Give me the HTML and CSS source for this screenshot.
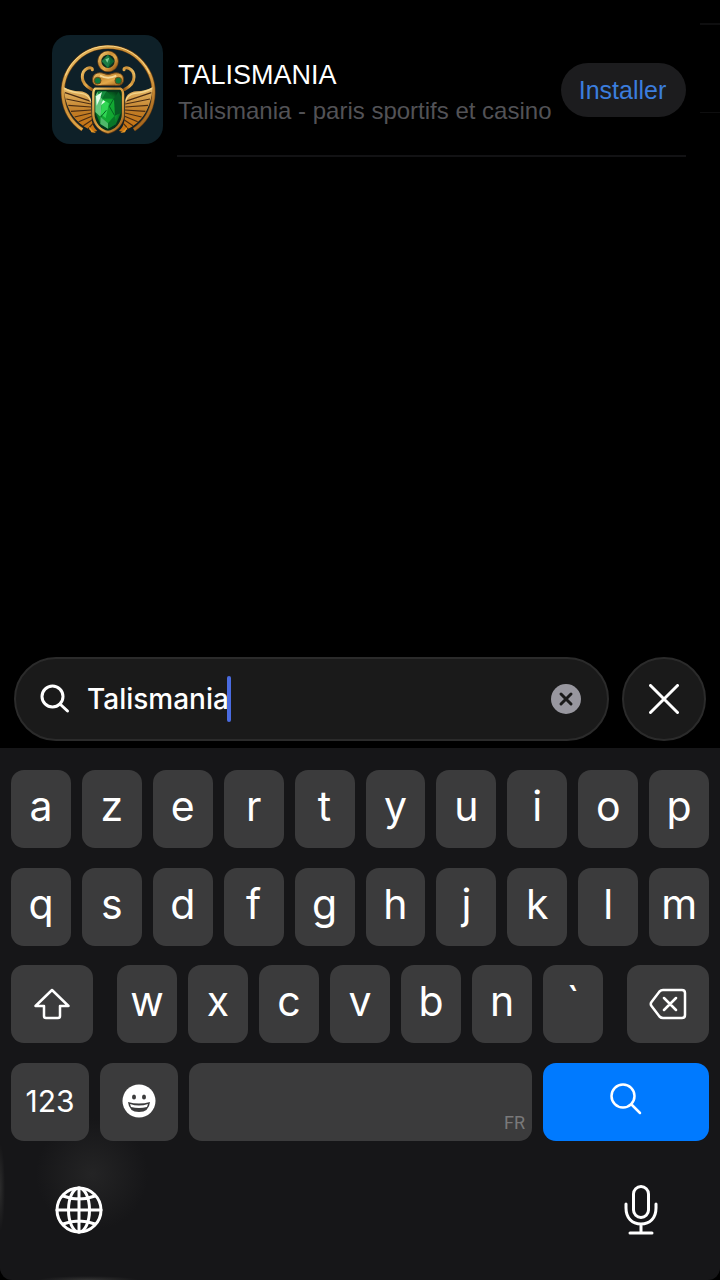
FILE: index.html
```html
<!DOCTYPE html>
<html lang="fr">
<head>
<meta charset="utf-8">
<meta name="viewport" content="width=device-width, initial-scale=1">
<title>Talismania</title>
<link rel="stylesheet" href="styles.css">
</head>
<body>
<main class="results">
  <article class="app">
    <svg class="app-icon" viewBox="0 0 333 327" preserveAspectRatio="none" role="img" aria-label="Talismania">
      <defs>
        <linearGradient id="gold" x1="0" y1="0" x2="1" y2="1">
          <stop offset="0" stop-color="#f5cf74"/><stop offset=".35" stop-color="#c98d35"/>
          <stop offset=".6" stop-color="#e3a94a"/><stop offset="1" stop-color="#94530f"/>
        </linearGradient>
        <linearGradient id="wing" x1="0" y1="0" x2="0" y2="1">
          <stop offset="0" stop-color="#e6bc6c"/><stop offset=".55" stop-color="#c07c26"/><stop offset="1" stop-color="#c9720e"/>
        </linearGradient>
        <radialGradient id="gem" cx=".5" cy=".55" r=".6">
          <stop offset="0" stop-color="#1fc440"/><stop offset=".6" stop-color="#0b8a2a"/><stop offset="1" stop-color="#04431a"/>
        </radialGradient>
        <g id="half">
          <path d="M35 156 C48 164 64 168 84 169 C104 171 114 180 117 194 L119 250 C120 268 126 279 136 288 L126 290 C108 283 86 270 70 252 C48 228 37 190 35 156Z" fill="url(#wing)"/>
          <path d="M117 199 L39 173 M117 207 L43 192 M117 216 L49 211 M118 225 L57 229 M118 234 L68 246 M119 244 L80 260 M121 254 L94 272 M125 263 L108 282" stroke="#4a2c12" stroke-width="3.5" fill="none"/>
          <path d="M37 160 C54 171 70 173 88 175 C105 177 113 186 116 200" stroke="#f4d68c" stroke-width="4" fill="none"/>
          <path d="M121 104 C121 92 91 99 91 126 C91 143 100 153 119 163" stroke="url(#gold)" stroke-width="9" fill="none" stroke-linecap="round"/>
          <path d="M108 272 L120 285 L132 294 L118 292Z" fill="#e89825"/>
        </g>
      </defs>
      <rect width="333" height="327" fill="#0e2028"/>
      <path d="M91 284 A136 136 0 1 1 246 284" fill="none" stroke="#6a4116" stroke-width="12"/>
      <path d="M91 284 A136 136 0 1 1 246 284" fill="none" stroke="url(#gold)" stroke-width="8"/>
      <path d="M40 122 A136 136 0 0 1 293 116" fill="none" stroke="#f8d98c" stroke-width="3"/>
      <use href="#half"/>
      <use href="#half" transform="translate(337 0) scale(-1 1)"/>
      <circle cx="168" cy="79" r="25" fill="none" stroke="#6a4116" stroke-width="14"/>
      <circle cx="168" cy="79" r="25" fill="#102c20" stroke="url(#gold)" stroke-width="10"/>
      <path d="M168 59 L187 79 L168 99 L149 79Z" fill="#0b6330"/>
      <path d="M168 59 L175 79 L168 99 L149 79Z" fill="#1d7d45"/>
      <path d="M160 73 L172 68 L166 83Z" fill="#7ccf96"/>
      <path d="M122 139 C119 116 139 109 157 116 Q168 121 179 116 C198 109 218 116 214 139 C211 151 199 153 187 151 L150 151 C136 153 124 151 122 139Z" fill="url(#gold)" stroke="#6b4117" stroke-width="3"/>
      <path d="M144 122 Q168 134 193 122" fill="none" stroke="#f6d896" stroke-width="6"/>
      <circle cx="137" cy="137" r="10" fill="#107a3c" stroke="#6f4a16" stroke-width="3"/>
      <circle cx="199" cy="137" r="10" fill="#107a3c" stroke="#6f4a16" stroke-width="3"/>
      <path d="M127 160 H207 Q217 163 217 177 V240 C216 270 192 294 168 297 C145 294 121 270 120 240 V177 Q120 163 127 160Z" fill="#573616"/>
      <path d="M130 161 H205 Q213 164 213 178 V239 C212 266 191 287 168 291 C146 287 125 266 124 239 V178 Q124 164 130 161Z" fill="#06331b" stroke="url(#gold)" stroke-width="7"/>
      <path d="M136 170 H200 L207 185 V233 L192 267 L168 281 L145 267 L130 233 V185Z" fill="url(#gem)"/>
      <path d="M136 170 L151 193 L146 246 L130 231 V184Z" fill="#62c77c"/>
      <path d="M151 193 L164 169 H136Z" fill="#168d3e"/>
      <path d="M164 169 L186 190 H151Z" fill="#087028"/>
      <path d="M186 190 L200 170 L207 185 V233 L188 242Z" fill="#075b24"/>
      <path d="M151 193 H186 L188 242 L168 265 L146 246Z" fill="#12a832"/>
      <path d="M151 193 L171 205 L161 249 L146 238Z" fill="#31d654"/>
      <path d="M146 246 L168 265 L168 281 L145 267Z" fill="#4fb96b"/>
      <path d="M168 265 L188 242 L192 267 L168 281Z" fill="#087628"/>
      <path d="M132 184 L150 171 L144 191 L134 212Z M147 210 L153 195 L160 200Z" fill="#e3ffe9"/>
      <path d="M186 190 L172 214 L188 242 M146 246 L163 226" stroke="#056322" stroke-width="3" fill="none"/>
    </svg>
    <div class="app-row">
      <div class="app-text">
        <h1 class="app-name">TALISMANIA</h1>
        <p class="app-sub">Talismania - paris sportifs et casino</p>
      </div>
      <button class="install" type="button">Installer</button>
    </div>
  </article>
  <div class="next-peek"></div>
</main>

<form class="search">
  <label class="field">
    <svg class="field-icon" viewBox="0 0 30 30" aria-hidden="true"><circle cx="12.500" cy="12.500" r="10.500" /><path d="M20.500 20.500 L27.500 27"/></svg>
    <input class="field-input" type="text" value="Talismania" aria-label="Rechercher">
    <span class="caret"></span>
    <button class="clear" type="button" aria-label="Effacer"><svg viewBox="0 0 30 30"><path d="M10 10 L20 20 M20 10 L10 20"/></svg></button>
  </label>
  <button class="close" type="button" aria-label="Fermer"><svg viewBox="0 0 30 30"><path d="M1.500 1.500 L28.500 28.500 M28.500 1.500 L1.500 28.500"/></svg></button>
</form>

<section class="keyboard" aria-label="Clavier">
  <div class="rows">
    <div class="row">
      <button class="key">a</button><button class="key">z</button><button class="key">e</button><button class="key">r</button><button class="key">t</button><button class="key">y</button><button class="key">u</button><button class="key">i</button><button class="key">o</button><button class="key">p</button>
    </div>
    <div class="row">
      <button class="key">q</button><button class="key">s</button><button class="key">d</button><button class="key">f</button><button class="key">g</button><button class="key">h</button><button class="key">j</button><button class="key">k</button><button class="key">l</button><button class="key">m</button>
    </div>
    <div class="row row-wide">
      <button class="key key-side" aria-label="Majuscule"><svg class="shift" viewBox="0 0 36 32"><path d="M18 2 L34.500 18 H26 V28 Q26 30 24 30 H12 Q10 30 10 28 V18 H1.500Z"/></svg></button>
      <div class="row letters">
        <button class="key">w</button><button class="key">x</button><button class="key">c</button><button class="key">v</button><button class="key">b</button><button class="key">n</button><button class="key">`</button>
      </div>
      <button class="key key-side" aria-label="Supprimer"><svg class="back" viewBox="0 0 38 32"><path d="M14 2 H33 Q36 2 36 5 V27 Q36 30 33 30 H14 Q12 30 10.500 28.500 L2.500 18 Q1 16 2.500 14 L10.500 3.500 Q12 2 14 2Z M15 10 L27 22 M27 10 L15 22"/></svg></button>
    </div>
    <div class="row">
      <button class="key key-num">123</button>
      <button class="key key-emoji" aria-label="Emoji"><svg class="smile" viewBox="0 0 34 34"><circle cx="17" cy="17" r="16.500" fill="#fff"/><ellipse cx="12" cy="13" rx="2" ry="2.500" fill="#3b3b3c"/><ellipse cx="22" cy="13" rx="2" ry="2.500" fill="#3b3b3c"/><path d="M6 18 Q17 21 28 18 Q27 28 17 28 Q7 28 6 18Z" fill="#3b3b3c"/><path d="M8 20 Q17 23 26 20 L25 23 Q17 25 9 23Z" fill="#fff"/></svg></button>
      <button class="key key-space" aria-label="Espace"><span class="lang">FR</span></button>
      <button class="key key-go" aria-label="Rechercher"><svg class="go" viewBox="0 0 32 32"><circle cx="13" cy="13" r="11.500"/><path d="M21.500 21.500 L30 30"/></svg></button>
    </div>
  </div>
  <div class="tools">
    <button class="tool" aria-label="Langue"><svg class="globe" viewBox="0 0 48 48"><circle cx="24" cy="24" r="22"/><ellipse cx="24" cy="24" rx="10.500" ry="22"/><path d="M24 2 V46 M2 24 H46 M8 10 Q24 16 40 10 M8 38 Q24 32 40 38"/></svg></button>
    <button class="tool" aria-label="Dictée"><svg class="mic" viewBox="0 0 34 50"><rect x="9.500" y="1.500" width="15" height="31" rx="7.500"/><path d="M2 19 V23 C2 33 8 39 17 39 C26 39 32 33 32 23 V19 M17 39 V48 M6 48 H28"/></svg></button>
  </div>
</section>
</body>
</html>
```

FILE: styles.css
```css
* {
  box-sizing: border-box;
}

body {
  margin: 0;
  min-height: 100vh;
  display: flex;
  flex-direction: column;
  background: #000;
  color: #fff;
  font-family: Inter, "Liberation Sans", sans-serif;
}

button {
  margin: 0;
  padding: 0;
  border: 0;
  background: none;
  color: inherit;
  font: inherit;
}

svg {
  display: block;
  fill: none;
  stroke-linecap: round;
  stroke-linejoin: round;
}

.results {
  position: relative;
  flex: 1;
  padding: 35px 34px 0 52px;
}

.app {
  display: flex;
  gap: 14px;
  font-family: "Liberation Sans", Arial, sans-serif;
}

.app-icon {
  flex: none;
  width: 111px;
  height: 109px;
  border-radius: 18px;
  stroke-linecap: butt;
}

.app-row {
  flex: 1;
  display: flex;
  justify-content: space-between;
  align-items: flex-start;
  height: 122px;
  border-bottom: 2px solid #121214;
}

.app-text {
  padding: 24px 0 0 1px;
  white-space: nowrap;
}

.app-name {
  margin: 0;
  font-size: 27px;
  line-height: 32px;
  font-weight: 400;
}

.app-sub {
  margin: 4px 0 0;
  font-size: 24px;
  line-height: 32px;
  color: #525256;
}

.install {
  width: 125px;
  height: 54px;
  margin-top: 28px;
  padding-right: 2px;
  border-radius: 27px;
  background: #1c1c1e;
  color: #3b7ddd;
  font-size: 25px;
}

.next-peek {
  position: absolute;
  top: 23px;
  right: 0;
  width: 20px;
  height: 90px;
  border: solid #0e0e0f;
  border-width: 2px 0 1px;
}

.search {
  display: flex;
  gap: 13px;
  padding: 0 14px 7px;
}

.field,
.close {
  height: 84px;
  border: 2px solid #2b2b2b;
  border-radius: 42px;
  background: #1a1a1a;
}

.field {
  flex: 1;
  display: flex;
  align-items: center;
  padding: 0 26px 0 24px;
}

.field-icon {
  width: 30px;
  height: 30px;
  margin-right: 17px;
  stroke: #fff;
  stroke-width: 3;
}

.field-input {
  field-sizing: content;
  padding: 0;
  border: 0;
  outline: 0;
  background: none;
  color: #fff;
  font: 500 28px/40px Inter, sans-serif;
}

.caret {
  width: 4px;
  height: 46px;
  margin-left: -2px;
  border-radius: 2px;
  background: #4a6be0;
}

.clear {
  width: 30px;
  height: 30px;
  margin-left: auto;
  border-radius: 50%;
  background: #98979f;
  stroke: #1a1a1a;
  stroke-width: 3;
}

.close {
  width: 84px;
  display: grid;
  place-items: center;
  stroke: #fff;
  stroke-width: 3;
}

.close svg {
  width: 30px;
  height: 30px;
}

.keyboard {
  padding: 22px 11px 0;
  border-radius: 0 0 12px 12px;
  background:
    radial-gradient(circle at 92px 426px, #242425, #24242500 56px),
    radial-gradient(ellipse 5px 44px at 0 440px, #2c2c2c, #2c2c2c00),
    radial-gradient(ellipse 50px 4px at 88px 100%, #333, #33333300),
    #161618;
}

.rows {
  display: flex;
  flex-direction: column;
  justify-content: space-between;
  min-height: 371px;
}

.row {
  display: flex;
  gap: 11px;
}

.row-wide {
  gap: 24px;
}

.letters {
  flex: 486;
}

.key {
  flex: 1 1 0;
  min-width: 0;
  height: 78px;
  display: flex;
  align-items: center;
  justify-content: center;
  padding-bottom: 6px;
  border-radius: 13px;
  background: #3b3b3c;
  font-size: 41px;
  line-height: 48px;
}

.key svg {
  stroke: #fff;
  stroke-width: 2.5;
}

.key .smile {
  width: 34px;
  height: 34px;
  stroke: none;
}

.key-side {
  flex-grow: 82;
  padding-bottom: 0;
}

.key-num,
.key-emoji {
  flex-grow: 78;
  padding-bottom: 2px;
}

.key-num {
  font-size: 30px;
}

.key-space {
  flex-grow: 343;
  align-items: flex-end;
  justify-content: flex-end;
}

.key-go {
  flex-grow: 166;
  background: #007aff;
}

.lang {
  margin-right: 7px;
  color: #79797a;
  font-family: Roboto, "Liberation Sans", sans-serif;
  font-size: 18px;
  line-height: 24px;
}

.shift {
  width: 36px;
  height: 32px;
}

.back {
  width: 38px;
  height: 32px;
}

.go {
  width: 32px;
  height: 32px;
}

.tools {
  display: flex;
  justify-content: space-between;
  align-items: center;
  padding: 44px 51px 45px 44px;
}

.tool {
  stroke: #fff;
  stroke-width: 3;
}

.globe {
  width: 48px;
  height: 48px;
}

.mic {
  width: 34px;
  height: 50px;
}
```
